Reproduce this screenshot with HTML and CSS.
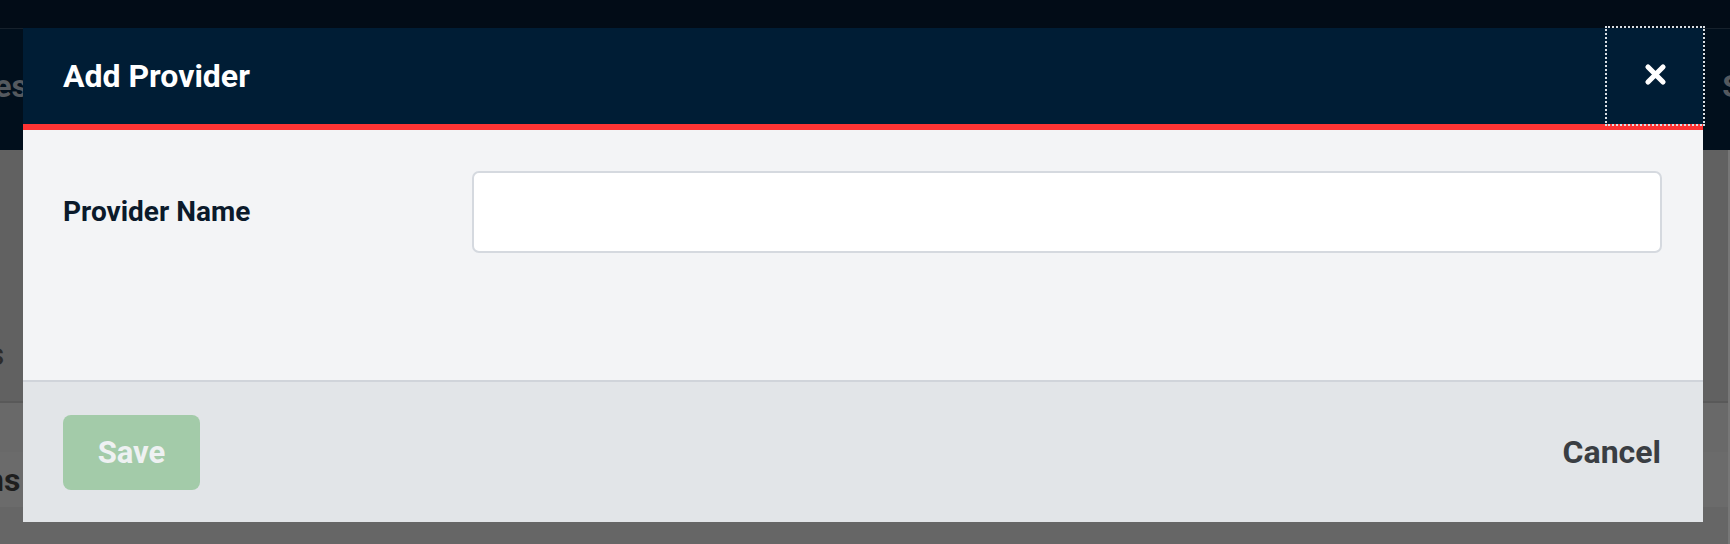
FILE: index.html
```html
<!DOCTYPE html>
<html lang="en">
<head>
<meta charset="utf-8">
<title>Add Provider</title>
<link rel="stylesheet" href="styles.css">
</head>
<body>
  <div class="app">
    <div class="topbar"></div>
    <div class="apphead">
      <span class="nav-item nav-left">Services</span>
      <span class="nav-item nav-right">Settings</span>
    </div>
    <div class="content">
      <div class="row row-title"><span class="row-text">Providers</span></div>
      <div class="row row-tabs"></div>
      <div class="row row-head"><span class="row-text strong">Columns</span></div>
      <div class="row row-rest"></div>
    </div>
  </div>

  <div class="overlay">
    <div class="modal" role="dialog" aria-labelledby="modal-title">
      <div class="modal-header">
        <h2 id="modal-title" class="modal-title">Add Provider</h2>
        <button class="close-btn" aria-label="Close">
          <svg class="close-icon" width="23" height="23" viewBox="0 0 23 23">
            <path d="M4 4 L19 19 M19 4 L4 19" stroke="#ffffff" stroke-width="5.2" stroke-linecap="round" fill="none"/>
          </svg>
        </button>
      </div>
      <div class="modal-body">
        <label class="field-label" for="provider-name">Provider Name</label>
        <input id="provider-name" class="field-input" type="text">
      </div>
      <div class="modal-footer">
        <button class="btn-save" disabled>Save</button>
        <button class="btn-cancel">Cancel</button>
      </div>
    </div>
  </div>
</body>
</html>
```

FILE: styles.css
```css
* { box-sizing: border-box; }

html, body {
  margin: 0;
  padding: 0;
  height: 100%;
  overflow: hidden;
}

body {
  font-family: Roboto, "Liberation Sans", Arial, sans-serif;
  background: #666666;
}

/* ---------- underlying (dimmed) page ---------- */
.app {
  display: flex;
  flex-direction: column;
  height: 100%;
}

.topbar {
  height: 28px;
  background: #020c17;
}

.apphead {
  height: 122px;
  background: #010f1c;
  border-top: 1px solid #16212c;
  display: flex;
  justify-content: space-between;
  align-items: center;
  overflow: hidden;
}

.nav-item {
  font-size: 32px;
  font-weight: 700;
  color: #54595f;
  white-space: nowrap;
  padding-bottom: 8px;
}

.nav-left { margin-left: -96px; }
.nav-right { margin-right: -112px; }

.content {
  flex: 1;
  display: flex;
  flex-direction: column;
  border-right: 2px solid #777777;
}

.row {
  display: flex;
  align-items: center;
  overflow: hidden;
}

.row-title {
  height: 253px;
  background: #616161;
  border-bottom: 2px solid #595959;
  padding-top: 156px;
}

.row-tabs {
  height: 49px;
  background: #696969;
}

.row-head {
  height: 55px;
  background: #6b6b6b;
}

.row-rest {
  flex: 1;
  background: #666666;
}

.row-text {
  font-size: 32px;
  color: #2b2b2b;
  margin-left: -130px;
}

.row-text.strong {
  font-weight: 700;
  color: #1e1e1e;
  margin-left: -107px;
}

/* ---------- modal ---------- */
.overlay {
  position: fixed;
  inset: 0;
  display: flex;
  justify-content: center;
  align-items: flex-start;
  padding: 28px 4px 0 0;
}

.modal {
  width: 1680px;
  display: flex;
  flex-direction: column;
}

.modal-header {
  height: 102px;
  background: #001d35;
  border-bottom: 6px solid #ff3434;
  display: flex;
  align-items: center;
  justify-content: space-between;
  padding-left: 40px;
}

.modal-title {
  margin: 0;
  font-size: 32px;
  font-weight: 700;
  color: #ffffff;
}

.close-btn {
  width: 96px;
  height: 96px;
  align-self: flex-start;
  background: transparent;
  border: none;
  padding: 0 0 3px 0;
  outline: 2px dotted #d9dee4;
  outline-offset: 0;
  display: flex;
  align-items: center;
  justify-content: center;
  cursor: pointer;
}

.close-icon { display: block; }

.modal-body {
  height: 250px;
  background: #f3f4f6;
  padding: 41px 41px 0 40px;
  display: grid;
  grid-template-columns: 409px 1fr;
  align-items: start;
}

.field-label {
  height: 82px;
  display: flex;
  align-items: center;
  font-size: 28px;
  font-weight: 700;
  color: #0b1a2b;
  padding-bottom: 2px;
}

.field-input {
  height: 82px;
  width: 100%;
  border: 2px solid #d5d9df;
  border-radius: 7px;
  background: #ffffff;
  font: inherit;
  font-size: 28px;
  padding: 0 16px;
  outline: none;
}

.modal-footer {
  height: 142px;
  background: #e2e5e8;
  border-top: 2px solid #d0d4da;
  display: flex;
  align-items: center;
  justify-content: space-between;
  padding: 0 42px 0 40px;
}

.btn-save {
  width: 137px;
  height: 75px;
  border: none;
  border-radius: 8px;
  background: #a3cba9;
  color: #eef1f2;
  font-family: inherit;
  font-size: 31px;
  font-weight: 700;
  padding: 0;
}

.btn-cancel {
  border: none;
  background: transparent;
  color: #3a3e43;
  font-family: inherit;
  font-size: 32px;
  font-weight: 700;
  padding: 0;
  cursor: pointer;
}
```
